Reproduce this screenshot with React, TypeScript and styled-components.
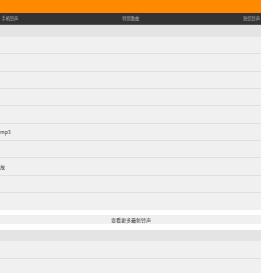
import React from 'react';
import styled, { createGlobalStyle } from 'styled-components';

const GlobalStyle = createGlobalStyle`
  html, body {
    margin: 0;
    padding: 0;
    background: #fff;
    font-family: "Noto Sans CJK SC", "Liberation Sans", sans-serif;
  }
  * {
    box-sizing: border-box;
  }
`;

const topRows = ['', '', '', '', '', 'mp3', '', '故', '', ''];
const bottomRows = ['', ''];

const App: React.FC = () => {
  return (
    <Page>
      <GlobalStyle />
      <TopBar />
      <Nav>
        <NavItem>手机铃声</NavItem>
        <NavItem>特别歌曲</NavItem>
        <NavItem>短信铃声</NavItem>
      </Nav>
      <SectionHead />
      <List>
        {topRows.map((title, i) => (
          <Row key={i} last={i === topRows.length - 1}>
            {title}
          </Row>
        ))}
      </List>
      <MoreWrap>
        <MoreButton>查看更多最新铃声</MoreButton>
      </MoreWrap>
      <SectionHead short />
      <List>
        {bottomRows.map((title, i) => (
          <Row key={i}>{title}</Row>
        ))}
      </List>
    </Page>
  );
};

export default App;

const Page = styled.div`
  width: 261px;
  display: flex;
  flex-direction: column;
`;

const TopBar = styled.div`
  height: 13px;
  background: #ff8a00;
`;

const Nav = styled.div`
  height: 12px;
  background: #333333;
  display: flex;
  align-items: center;
  justify-content: space-between;
  padding: 0 1px 0 1.5px;
  border-bottom: 0.5px solid #555;
`;

const NavItem = styled.span`
  color: #bdbdbd;
  font-size: 4.2px;
  line-height: 1;
`;

const SectionHead = styled.div<{ short?: boolean }>`
  height: ${p => (p.short ? 11 : 12)}px;
  background: #e4e4e4;
`;

const List = styled.div`
  display: flex;
  flex-direction: column;
  background: #f0f0f0;
`;

const Row = styled.div<{ last?: boolean }>`
  height: 17.35px;
  display: flex;
  align-items: center;
  font-size: 5px;
  color: #333;
  border-bottom: ${p => (p.last ? 'none' : '1px solid #e0e0e0')};
  overflow: hidden;
  white-space: nowrap;
`;

const MoreWrap = styled.div`
  background: #fff;
  padding: 5px 0 6px;
`;

const MoreButton = styled.div`
  height: 9px;
  background: #f0f0f0;
  display: flex;
  align-items: center;
  justify-content: center;
  font-size: 5px;
  color: #333;
  padding-left: 1px;
`;
